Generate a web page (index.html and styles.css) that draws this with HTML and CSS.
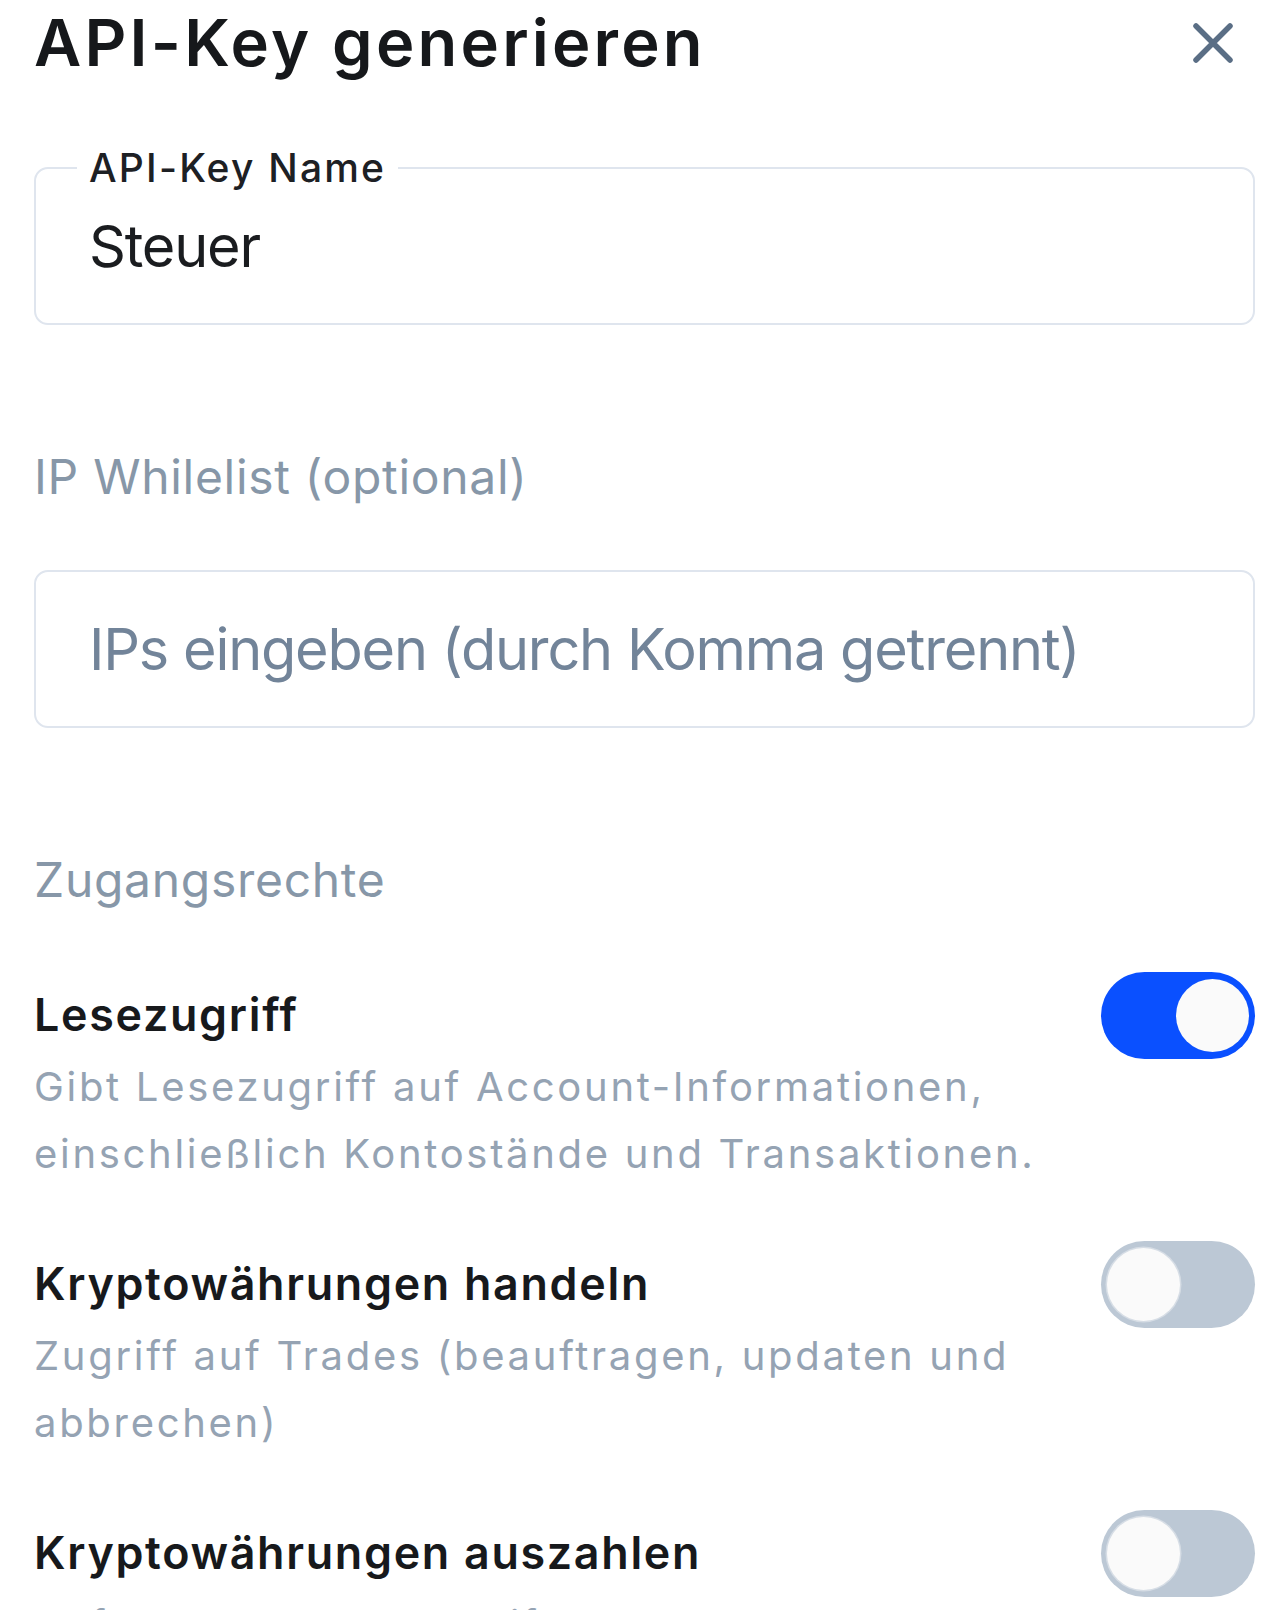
FILE: index.html
```html
<!DOCTYPE html>
<html lang="de">
<head>
<meta charset="utf-8">
<title>API-Key generieren</title>
<link rel="stylesheet" href="styles.css">
</head>
<body>
<div class="sheet">
  <header class="sheet-head">
    <h1 class="sheet-title">API-Key generieren</h1>
    <button class="close-btn" type="button" aria-label="Schließen">
      <svg width="42" height="42" viewBox="0 0 42 42" aria-hidden="true">
        <path d="M4 4 L38 38 M38 4 L4 38" stroke="#5a6e85" stroke-width="5.5" stroke-linecap="round" fill="none"/>
      </svg>
    </button>
  </header>

  <div class="field field-filled">
    <label class="field-label" for="keyname">API-Key Name</label>
    <input id="keyname" class="field-input" type="text" value="Steuer">
  </div>

  <h2 class="section-label section-ip">IP Whilelist (optional)</h2>

  <div class="field">
    <input class="field-input" type="text" placeholder="IPs eingeben (durch Komma getrennt)">
  </div>

  <h2 class="section-label section-rights">Zugangsrechte</h2>

  <div class="perms">
    <div class="perm">
      <div class="perm-head">
        <span class="perm-title">Lesezugriff</span>
        <span class="toggle toggle-on"><span class="knob"></span></span>
      </div>
      <p class="perm-desc">Gibt Lesezugriff auf Account-Informationen, einschließlich Kontostände und Transaktionen.</p>
    </div>
    <div class="perm">
      <div class="perm-head">
        <span class="perm-title">Kryptowährungen handeln</span>
        <span class="toggle"><span class="knob"></span></span>
      </div>
      <p class="perm-desc">Zugriff auf Trades (beauftragen, updaten und abbrechen)</p>
    </div>
    <div class="perm">
      <div class="perm-head">
        <span class="perm-title">Kryptowährungen auszahlen</span>
        <span class="toggle"><span class="knob"></span></span>
      </div>
      <p class="perm-desc">Auf Ihre Wallets zugreifen und Auszahlungen veranlassen</p>
    </div>
  </div>
</div>
</body>
</html>
```

FILE: styles.css
```css
* { box-sizing: border-box; }

html, body {
  margin: 0;
  padding: 0;
  background: #ffffff;
}

body {
  font-family: Inter, "Noto Sans", "Liberation Sans", sans-serif;
  color: #17191c;
  overflow: hidden;
  height: 1610px;
}

.sheet {
  width: 1221px;
  margin-left: 34px;
  padding-top: 5px;
}

.sheet-head {
  display: flex;
  align-items: center;
  justify-content: space-between;
  height: 76px;
}

.sheet-title {
  margin: 0;
  font-size: 65px;
  line-height: 76px;
  font-weight: 600;
  letter-spacing: 3.2px;
  color: #16181b;
}

.close-btn {
  display: flex;
  align-items: center;
  justify-content: center;
  width: 42px;
  height: 42px;
  margin-right: 21px;
  padding: 0;
  border: 0;
  background: transparent;
}

.field {
  position: relative;
  margin-top: 86px;
}

.field-input {
  display: block;
  width: 100%;
  height: 158px;
  padding: 0 53px;
  border: 2px solid #dfe5ee;
  border-radius: 14px;
  background: #ffffff;
  font-family: inherit;
  font-size: 57.6px;
  font-weight: 400;
  letter-spacing: -1.2px;
  color: #1a1c1f;
  outline: none;
}

.field-input::placeholder {
  color: #728499;
  opacity: 1;
}

.field-label {
  position: absolute;
  top: -23px;
  left: 43px;
  padding: 0 12px;
  background: #ffffff;
  font-size: 39px;
  line-height: 47px;
  font-weight: 500;
  letter-spacing: 2.2px;
  color: #1d2024;
}

.section-label {
  margin: 0;
  font-size: 48px;
  line-height: 58px;
  font-weight: 400;
  letter-spacing: 0.7px;
  color: #8797a8;
}

.section-ip {
  margin-top: 123px;
}

.section-ip + .field {
  margin-top: 64px;
}

.section-rights {
  margin-top: 123px;
}

.perms {
  display: flex;
  flex-direction: column;
  gap: 59px;
  margin-top: 68px;
}

.perm-head {
  display: flex;
  align-items: center;
  justify-content: space-between;
  height: 76px;
}

.perm-title {
  font-size: 44.8px;
  line-height: 76px;
  font-weight: 600;
  letter-spacing: 1.7px;
  color: #17191c;
}

.perm-desc {
  margin: 0;
  max-width: 1030px;
  font-size: 40px;
  line-height: 67px;
  font-weight: 400;
  letter-spacing: 2.7px;
  color: #95a3b3;
}

.toggle {
  position: relative;
  flex: none;
  width: 154px;
  height: 87px;
  margin: -6px 0;
  border-radius: 44px;
  background: #bcc8d5;
}

.knob {
  position: absolute;
  top: 7px;
  left: 6px;
  width: 73px;
  height: 73px;
  border-radius: 50%;
  background: #fafafa;
  box-shadow: 0 0 0 1.5px #d6dde5;
}

.toggle-on {
  background: #0a50ff;
}

.toggle-on .knob {
  left: auto;
  right: 6px;
  box-shadow: none;
}
```
